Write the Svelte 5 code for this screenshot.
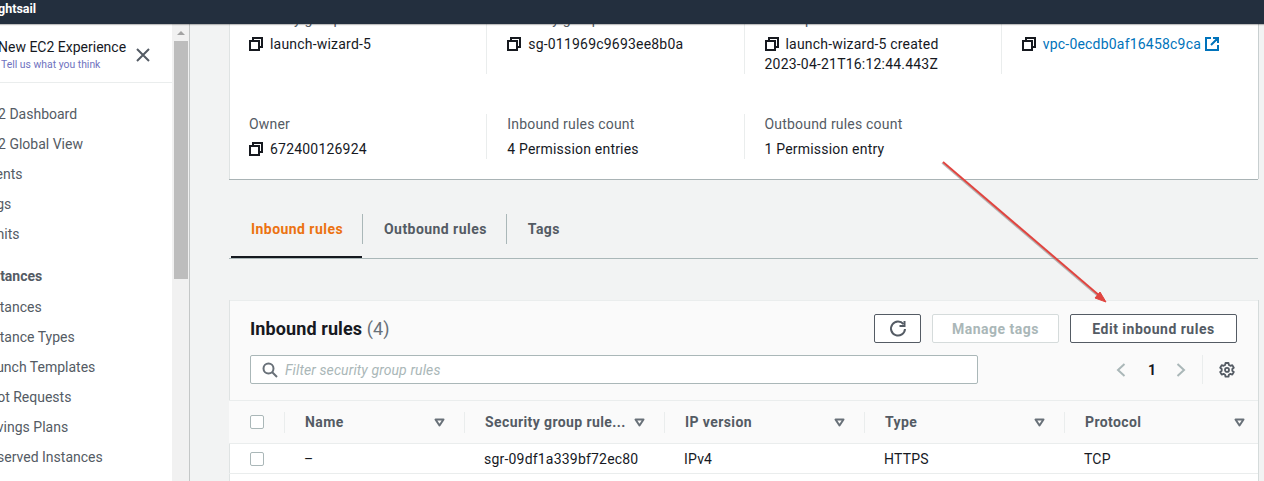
<script>
  const nav = [
    { label: 'EC2 Dashboard' },
    { label: 'EC2 Global View' },
    { label: 'Events' },
    { label: 'Tags' },
    { label: 'Limits' },
    { label: 'Instances', heading: true },
    { label: 'Instances' },
    { label: 'Instance Types' },
    { label: 'Launch Templates' },
    { label: 'Spot Requests' },
    { label: 'Savings Plans' },
    { label: 'Reserved Instances' }
  ];
  const columns = ['Name', 'Security group rule...', 'IP version', 'Type', 'Protocol'];
  const row = ['–', 'sgr-09df1a339bf72ec80', 'IPv4', 'HTTPS', 'TCP'];
</script>

{#snippet copyIcon()}
  <svg class="copy" viewBox="0 0 14 14" width="14" height="14" aria-hidden="true">
    <path d="M4 3V1h9v9h-3M1 4h9v9H1z" fill="none" stroke="#16191f" stroke-width="2" />
  </svg>
{/snippet}

{#snippet caret()}
  <svg class="caret" viewBox="0 0 11 9" width="11" height="9" aria-hidden="true">
    <path d="M1.5 1.5h8l-4 6z" fill="none" stroke="#687078" stroke-width="2" stroke-linejoin="round" />
  </svg>
{/snippet}

<div class="page">
  <header class="topbar"><span class="brand">Lightsail</span></header>

  <div class="body">
    <aside class="sidebar">
      <div class="side-head">
        <div class="side-title">
          <div class="experience">New EC2 Experience</div>
          <div class="feedback">Tell us what you think</div>
        </div>
        <svg class="close" viewBox="0 0 14 14" width="14" height="14" aria-hidden="true">
          <path d="M1 1l12 12M13 1L1 13" stroke="#545b64" stroke-width="2" fill="none" />
        </svg>
      </div>
      <nav class="nav">
        {#each nav as item}
          <div class="nav-item" class:heading={item.heading}>{item.label}</div>
        {/each}
      </nav>
    </aside>

    <div class="scrollbar">
      <div class="arrow-up"></div>
      <div class="thumb"></div>
    </div>

    <main class="main">
      <section class="details">
        <div class="detail-row first">
          <div class="cell">
            <div class="label">Security group name</div>
            <div class="value">{@render copyIcon()}launch-wizard-5</div>
          </div>
          <div class="cell">
            <div class="label">Security group ID</div>
            <div class="value">{@render copyIcon()}sg-011969c9693ee8b0a</div>
          </div>
          <div class="cell">
            <div class="label">Description</div>
            <div class="value">{@render copyIcon()}launch-wizard-5 created</div>
            <div class="value-line">2023-04-21T16:12:44.443Z</div>
          </div>
          <div class="cell">
            <div class="label">VPC ID</div>
            <div class="value">
              {@render copyIcon()}<span class="link">vpc-0ecdb0af16458c9ca</span>
              <svg class="external" viewBox="0 0 14 14" width="14" height="14" aria-hidden="true">
                <path d="M6 1H1v12h12V8M8 1h5v5M13 1L6 8" fill="none" stroke="#0073bb" stroke-width="2" />
              </svg>
            </div>
          </div>
        </div>
        <div class="detail-row second">
          <div class="cell">
            <div class="label">Owner</div>
            <div class="value">{@render copyIcon()}672400126924</div>
          </div>
          <div class="cell">
            <div class="label">Inbound rules count</div>
            <div class="value">4 Permission entries</div>
          </div>
          <div class="cell">
            <div class="label">Outbound rules count</div>
            <div class="value">1 Permission entry</div>
          </div>
          <div class="cell empty"></div>
        </div>
      </section>

      <div class="tabs">
        <div class="tab active"><span>Inbound rules</span></div>
        <div class="tab"><span>Outbound rules</span></div>
        <div class="tab"><span>Tags</span></div>
      </div>

      <section class="rules">
        <div class="rules-head">
          <div class="title-row">
            <h2>Inbound rules <span class="count">(4)</span></h2>
            <div class="actions">
              <button class="btn refresh" aria-label="Refresh">
                <svg viewBox="0 0 18 18" width="18" height="18" aria-hidden="true">
                  <path d="M14.5 4.2A7 7 0 1 0 16 9" fill="none" stroke="#545b64" stroke-width="2" />
                  <path d="M15.5 1v5h-5" fill="none" stroke="#545b64" stroke-width="2" />
                </svg>
              </button>
              <button class="btn disabled">Manage tags</button>
              <button class="btn edit">Edit inbound rules</button>
            </div>
          </div>
          <div class="filter-row">
            <div class="search">
              <svg viewBox="0 0 16 16" width="16" height="16" aria-hidden="true">
                <circle cx="6.5" cy="6.5" r="5" fill="none" stroke="#687078" stroke-width="2" />
                <path d="M10 10l5 5" stroke="#687078" stroke-width="2" />
              </svg>
              <span>Filter security group rules</span>
            </div>
            <div class="pager">
              <svg viewBox="0 0 10 14" width="10" height="14" aria-hidden="true">
                <path d="M8.5 1L2 7l6.5 6" fill="none" stroke="#aab7b8" stroke-width="2" />
              </svg>
              <span class="page-no">1</span>
              <svg viewBox="0 0 10 14" width="10" height="14" aria-hidden="true">
                <path d="M1.5 1L8 7l-6.5 6" fill="none" stroke="#aab7b8" stroke-width="2" />
              </svg>
            </div>
            <div class="settings">
              <svg viewBox="0 0 16 16" width="16" height="16" aria-hidden="true">
                <path d="M6.5 1h3l.4 2 1.500.8 1.900-.7 1.500 2.600-1.500 1.300v1.700l1.500 1.300-1.500 2.600-1.900-.7-1.500.8-.4 2h-3l-.4-2-1.500-.8-1.900.7-1.500-2.600 1.500-1.300V7L1.200 5.700l1.500-2.600 1.900.7 1.500-.8z" fill="none" stroke="#545b64" stroke-width="1.800" stroke-linejoin="round" />
                <circle cx="8" cy="7.900" r="2" fill="none" stroke="#545b64" stroke-width="1.800" />
              </svg>
            </div>
          </div>
        </div>

        <div class="table">
          <div class="tr th">
            <div class="check-col"><div class="box"></div></div>
            {#each columns as col}
              <div class="col"><span class="col-name">{col}</span>{@render caret()}</div>
            {/each}
          </div>
          <div class="tr td">
            <div class="check-col"><div class="box"></div></div>
            {#each row as text}
              <div class="col">{text}</div>
            {/each}
          </div>
          <div class="tr blank"></div>
        </div>
      </section>
    </main>
  </div>

  <!-- annotation drawn on top of the screenshot -->
  <svg class="annotation" viewBox="0 0 1264 481" width="1264" height="481" aria-hidden="true">
    <path d="M943 162L1101 297" stroke="#8a8a8a" stroke-width="1.500" opacity="0.6" transform="translate(-1 1)" />
    <path d="M943 162L1101 297" stroke="#e0443f" stroke-width="2" />
    <path d="M1106 302l-11-4 5-6z" fill="#e0443f" stroke="#e0443f" />
  </svg>
</div>

<style>
  :global(body) {
    margin: 0;
    background: #f2f3f3;
  }

  .page {
    position: relative;
    width: 1264px;
    height: 481px;
    overflow: hidden;
    font-family: Roboto, sans-serif;
    font-size: 14px;
    color: #16191f;
    background: #f2f3f3;
  }

  .topbar {
    height: 24px;
    background: #232f3e;
    overflow: hidden;
    box-shadow: 0 1px 1px rgba(0, 0, 0, 0.25);
    position: relative;
    z-index: 1;
  }

  .brand {
    display: block;
    margin-left: -12px;
    color: #fff;
    font-size: 12.500px;
    font-weight: 700;
    line-height: 17px;
  }

  .body {
    display: flex;
    height: 457px;
  }

  .sidebar {
    width: 172px;
    flex: none;
    background: #fff;
    overflow: hidden;
  }

  .side-head {
    display: flex;
    justify-content: space-between;
    height: 59px;
    box-sizing: border-box;
    padding: 13px 22px 0 0;
    border-bottom: 1px solid #eaeded;
  }

  .side-title {
    margin-left: -2px;
    white-space: nowrap;
  }

  .experience {
    line-height: 20px;
  }

  .feedback {
    margin: 0 0 0 3px;
    font-size: 10.400px;
    line-height: 15px;
    color: #6f72c0;
  }

  .close {
    margin-top: 11px;
  }

  .nav {
    margin: 16px 0 0 -19px;
    color: #545b64;
    white-space: nowrap;
  }

  .nav-item {
    height: 30px;
    line-height: 30px;
  }

  .nav-item.heading {
    margin-top: 12px;
    height: 31px;
    font-weight: 700;
  }

  .scrollbar {
    width: 17px;
    flex: none;
    background: #f1f1f1;
    border-right: 1px solid #c4c7c7;
    padding-top: 7px;
  }

  .arrow-up {
    width: 0;
    margin: 0 auto;
    border: 4px solid transparent;
    border-top: 0;
    border-bottom: 4px solid #a3a3a3;
  }

  .thumb {
    margin: 6px 1px 0 2px;
    height: 238px;
    background: #bdbdbd;
  }

  .main {
    flex: 1;
    min-width: 0;
    padding: 0 6px 0 39px;
    overflow: hidden;
    letter-spacing: 0.2px;
  }

  /* scrolled: the top of the card sits under the header */
  .details {
    margin-top: -15px;
    height: 170px;
    background: #fff;
    box-shadow: inset 1px 0 #dfe3e3, 0 1px #a9b3b5, 1px 0 #c8cfd0;
  }

  .detail-row {
    display: grid;
    grid-template-columns: repeat(4, 1fr);
  }

  .detail-row.first {
    height: 65px;
    margin-bottom: 40px;
  }

  .detail-row.second {
    height: 45px;
  }

  .cell {
    box-sizing: border-box;
    padding-left: 20px;
    border-left: 1px solid #eaeded;
    min-width: 0;
  }

  .cell:first-child,
  .cell.empty {
    border-left: 0;
  }

  .label {
    color: #545b64;
    line-height: 20px;
  }

  .value,
  .value-line {
    display: flex;
    align-items: center;
    line-height: 20px;
    white-space: nowrap;
  }

  .value {
    margin-top: 5px;
  }

  .copy {
    margin-right: 7px;
    flex: none;
  }

  .link {
    color: #0073bb;
  }

  .external {
    margin-left: 4px;
  }

  .tabs {
    display: flex;
    margin-top: 35px;
    height: 44px;
    border-bottom: 1px solid #aab7b8;
    padding-left: 2px;
    letter-spacing: 0.45px;
  }

  .tab {
    height: 30px;
    padding: 0 19px 0 21px;
    border-left: 1px solid #aab7b8;
    font-weight: 700;
    line-height: 30px;
    color: #545b64;
    position: relative;
  }

  .tab:first-child {
    border-left: 0;
    width: 131px;
    box-sizing: border-box;
    padding: 0 0 0 20px;
  }

  .tab.active {
    color: #ec7211;
  }

  .tab.active::after {
    content: "";
    position: absolute;
    left: 0;
    right: 0;
    top: 42px;
    height: 2px;
    background: #16191f;
  }

  .rules {
    margin-top: 41px;
    background: #fff;
    overflow: hidden;
    box-shadow: inset 1px 0 #dfe3e3, 1px 0 #d5dbdb;
    height: 181px;
  }

  .rules-head {
    background: #fafafa;
    padding: 14px 21px 0;
    height: 100px;
    box-sizing: border-box;
    box-shadow: inset 1px 0 #dfe3e3, inset 0 1px #eaeded;
  }

  .title-row,
  .filter-row {
    display: flex;
    align-items: center;
  }

  .title-row {
    justify-content: space-between;
    height: 29px;
  }

  h2 {
    margin: 0;
    font-size: 18px;
    font-weight: 700;
    line-height: 30px;
    letter-spacing: 0.1px;
  }

  .count {
    font-weight: 400;
    color: #687078;
  }

  .actions {
    display: flex;
    gap: 11px;
  }

  .btn {
    box-sizing: border-box;
    height: 29px;
    padding: 0;
    border: 1px solid #545b64;
    border-radius: 2px;
    background: #fff;
    color: #545b64;
    font: 700 14px Roboto, sans-serif;
    letter-spacing: 0.5px;
  }

  .refresh {
    display: flex;
    align-items: center;
    justify-content: center;
    width: 47px;
  }

  .disabled {
    width: 127px;
    border-color: #d5dbdb;
    color: #aab7b8;
  }

  .edit {
    width: 167px;
  }

  .filter-row {
    margin-top: 12px;
    height: 29px;
  }

  .search {
    box-sizing: border-box;
    display: flex;
    flex: none;
    align-items: center;
    gap: 7px;
    width: 728px;
    height: 29px;
    padding-left: 11px;
    background: #fff;
    border: 1px solid #aab7b8;
    border-radius: 2px;
  }

  .search span {
    font-style: italic;
    color: #aab7b8;
    letter-spacing: 0.1px;
  }

  .pager {
    display: flex;
    flex: none;
    align-items: center;
    gap: 22px;
    margin-left: 138px;
    padding-right: 16px;
    height: 29px;
    border-right: 1px solid #eaeded;
  }

  .page-no {
    width: 6px;
    font-weight: 700;
  }

  .settings {
    display: flex;
    flex: none;
    margin-left: 16px;
  }

  .table {
    width: 1055px;
  }

  .tr {
    display: flex;
    box-sizing: border-box;
    border-top: 1px solid #eaeded;
  }

  .th {
    height: 43px;
    background: #fafafa;
    align-items: center;
    color: #545b64;
    font-weight: 700;
    letter-spacing: 0.4px;
  }

  .td {
    height: 30px;
    align-items: center;
  }

  .blank {
    height: 8px;
  }

  .check-col {
    width: 55px;
    flex: none;
    box-sizing: border-box;
    padding-left: 21px;
  }

  .box {
    width: 14px;
    height: 14px;
    box-sizing: border-box;
    background: #fff;
    border: 1px solid #aab7b8;
    border-radius: 2px;
  }

  .col {
    box-sizing: border-box;
    width: 200px;
    flex: none;
    display: flex;
    align-items: center;
    justify-content: space-between;
    padding: 0 19px 0 20px;
    white-space: nowrap;
  }

  .col:nth-child(2) {
    width: 180px;
  }

  .th .col {
    height: 21px;
    border-left: 1px solid #eaeded;
  }

  .caret {
    flex: none;
  }

  .annotation {
    position: absolute;
    left: 0;
    top: 0;
    z-index: 2;
    pointer-events: none;
  }
</style>
